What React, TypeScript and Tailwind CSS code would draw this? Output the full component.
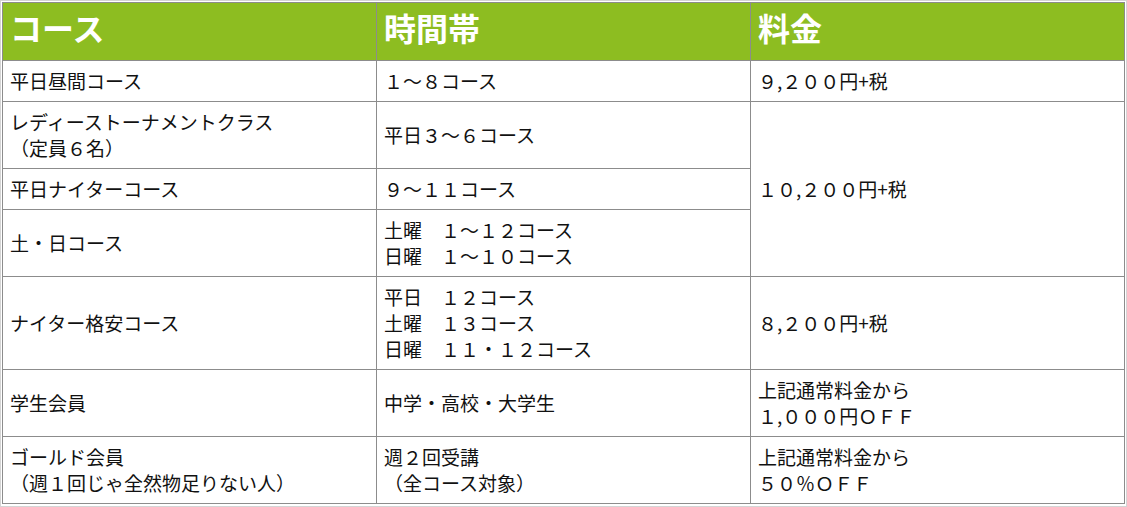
import React from 'react';

const cell = 'border border-[#8c8c8c] px-[7px] py-[7px] align-middle text-[19px] leading-[26px] text-[#111]';
const head = 'border border-[#8c8c8c] px-[7px] pt-[3px] pb-[11px] text-left align-middle text-[32px] leading-[43px] font-bold text-white';

function Lines({ items }: { items: string[] }) {
  return (
    <>
      {items.map((t, i) => (
        <div key={i} className="whitespace-pre">{t}</div>
      ))}
    </>
  );
}

export default function App() {
  return (
    <div
      className="w-full h-[507px] bg-white border border-[#d4d4d4] p-px"
      style={{ fontFamily: '"Noto Sans CJK JP", "Noto Sans", sans-serif' }}
    >
      <table className="w-full table-fixed border-collapse border border-[#8c8c8c]">
        <colgroup>
          <col className="w-[374px]" />
          <col className="w-[374px]" />
          <col />
        </colgroup>
        <thead>
          <tr className="bg-[#8dbd21]">
            <th className={head}>コース</th>
            <th className={head}>時間帯</th>
            <th className={head}>料金</th>
          </tr>
        </thead>
        <tbody>
          <tr>
            <td className={cell}>平日昼間コース</td>
            <td className={cell}>１～８コース</td>
            <td className={cell}>９,２００円+税</td>
          </tr>
          <tr>
            <td className={cell}>
              <Lines items={['レディーストーナメントクラス', '（定員６名）']} />
            </td>
            <td className={cell}>平日３～６コース</td>
            <td className={cell} rowSpan={3}>１０,２００円+税</td>
          </tr>
          <tr>
            <td className={cell}>平日ナイターコース</td>
            <td className={cell}>９～１１コース</td>
          </tr>
          <tr>
            <td className={cell}>土・日コース</td>
            <td className={cell}>
              <Lines items={['土曜　１～１２コース', '日曜　１～１０コース']} />
            </td>
          </tr>
          <tr>
            <td className={cell}>ナイター格安コース</td>
            <td className={cell}>
              <Lines items={['平日　１２コース', '土曜　１３コース', '日曜　１１・１２コース']} />
            </td>
            <td className={cell}>８,２００円+税</td>
          </tr>
          <tr>
            <td className={cell}>学生会員</td>
            <td className={cell}>中学・高校・大学生</td>
            <td className={cell}>
              <Lines items={['上記通常料金から', '１,０００円ＯＦＦ']} />
            </td>
          </tr>
          <tr>
            <td className={cell}>
              <Lines items={['ゴールド会員', '（週１回じゃ全然物足りない人）']} />
            </td>
            <td className={cell}>
              <Lines items={['週２回受講', '（全コース対象）']} />
            </td>
            <td className={cell}>
              <Lines items={['上記通常料金から', '５０％ＯＦＦ']} />
            </td>
          </tr>
        </tbody>
      </table>
    </div>
  );
}
